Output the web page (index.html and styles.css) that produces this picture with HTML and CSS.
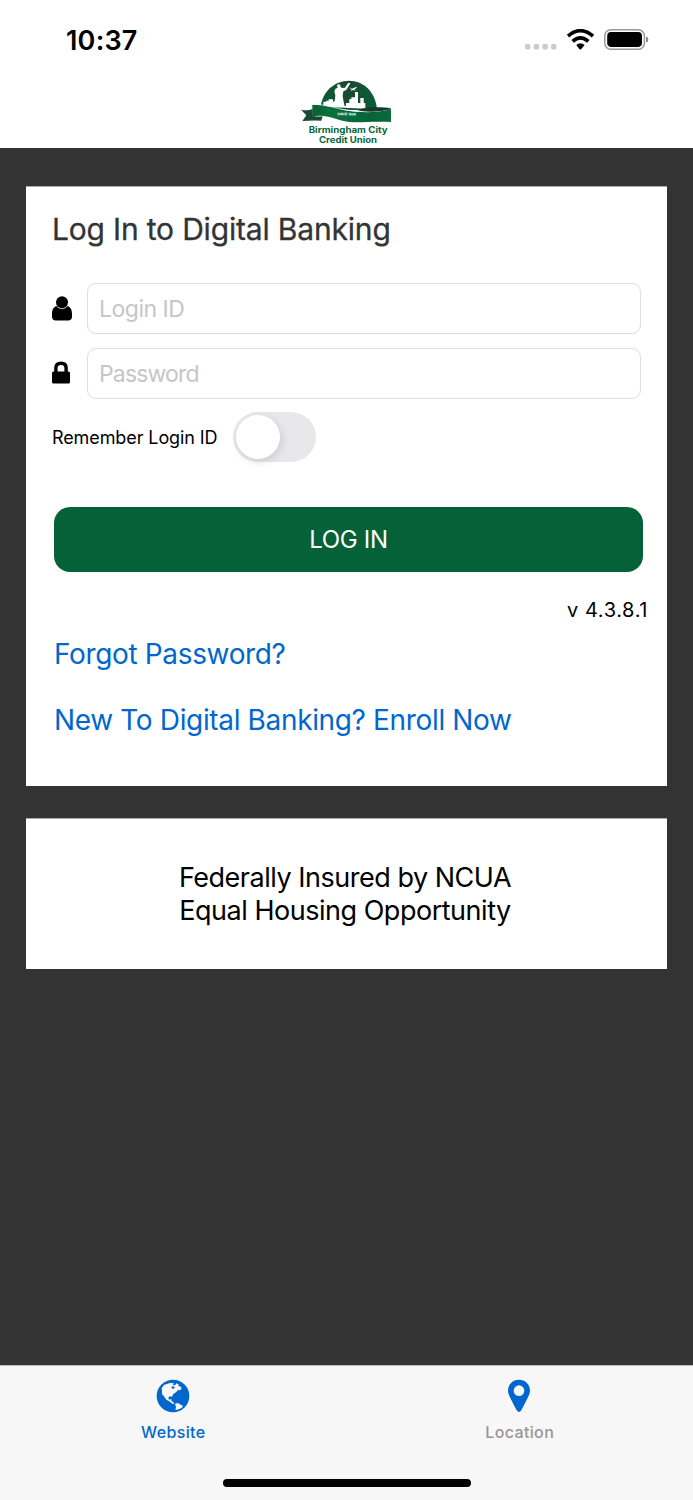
FILE: index.html
```html
<!DOCTYPE html>
<html lang="en">
<head>
    <meta charset="UTF-8">
    <meta name="viewport" content="width=device-width, initial-scale=1.0">
    <title>Birmingham City Credit Union</title>
    <link rel="stylesheet" href="styles.css">
</head>
<body>
    <header class="header">
        <div class="status-bar">
            <span class="time">10:37</span>
            <div class="status-icons">
                <svg class="dots" width="32" height="6" viewBox="0 0 32 6" fill="#cbcbcc">
                    <rect width="5.4" height="5.4" rx="1.6"/>
                    <rect x="8.7" width="5.4" height="5.4" rx="1.6"/>
                    <rect x="17.4" width="5.4" height="5.4" rx="1.6"/>
                    <rect x="26.1" width="5.4" height="5.4" rx="1.6"/>
                </svg>
                <svg class="wifi" width="27" height="21" viewBox="0 0 81 63">
                    <path d="M3 21Q40 -11 78 21" fill="none" stroke="#000" stroke-width="11"/>
                    <path d="M17 37Q40 16 64 37" fill="none" stroke="#000" stroke-width="11"/>
                    <path d="M28 48Q40 38 53 48L43 60Q40 63 37 60Z"/>
                </svg>
                <svg class="battery" width="45" height="21" viewBox="0 0 45 21">
                    <rect x=".8" y=".8" width="39.6" height="19.4" rx="6" fill="none" stroke="#999" stroke-width="1.5"/>
                    <rect x="3.2" y="3.1" width="34.8" height="14.8" rx="3.8"/>
                    <path d="M42 7.3Q44.3 8 44.3 10.5T42 13.6Z" fill="#888"/>
                </svg>
            </div>
        </div>
        <svg class="logo" width="94" height="68" viewBox="30 24 282 204">
            <defs>
                <linearGradient id="dome" x1="0" y1="0" x2="1" y2="0">
                    <stop offset="0" stop-color="#075d35"/>
                    <stop offset=".5" stop-color="#1c4932"/>
                    <stop offset="1" stop-color="#086037"/>
                </linearGradient>
                <linearGradient id="ribbon" x1="0" y1="0" x2="1" y2="0">
                    <stop offset="0" stop-color="#0f5d38"/>
                    <stop offset=".2" stop-color="#08713d"/>
                    <stop offset=".75" stop-color="#07643a"/>
                    <stop offset="1" stop-color="#0a6a3c"/>
                </linearGradient>
            </defs>
            <path d="M92 112C96 66 132 32 177 32S256 66 261 117Q215 126 92 112Z" fill="url(#dome)"/>
            <g fill="#fff">
                <path d="M100 110V95H109V92H116V88H129V96L134 93 136 77 133 63Q135 54 143 53L141 47Q143 41 150 44L153 53 164 54 175 38 181 40 169 60 160 64 158 78 161 96 164 108H168V99H178V87H184V82H195V66H204V99H211V84H221V99H226V116Z"/>
                <path d="M178 52L186 56 198 51 201 53 193 58 197 61 191 61 188 60 182 64 185 59Z"/>
            </g>
            <path d="M33 119Q52 123 68 117V137Q84 141 98 139L94 152Q70 150 37 153L49 136Z" fill="#174a31"/>
            <path d="M67 104C108 103 134 116 174 122C204 126 230 128 262 125C290 122 300 119 303 115V156C263 153 230 157 194 157C144 157 118 130 67 139Z" fill="url(#ribbon)"/>
            <path d="M66 103C108 102 134 115 174 121C184 123 195 124 205 124" fill="none" stroke="#fff" stroke-width="2"/>
            <path d="M204 121Q216 113 250 112Q299 110 302 116Q292 122 248 125Q216 126 204 121Z" fill="#163b29"/>
            <text class="logo-since" x="142" y="136" textLength="56" transform="rotate(1 170 137)">SINCE 1956</text>
            <text class="logo-name" x="56" y="190" textLength="237" lengthAdjust="spacingAndGlyphs">Birmingham City</text>
            <text class="logo-name" x="87" y="218" textLength="174" lengthAdjust="spacingAndGlyphs">Credit Union</text>
        </svg>
    </header>

    <main class="content">
        <section class="card login-card">
            <h1>Log In to Digital Banking</h1>
            <div class="field">
                <svg class="field-icon" width="22" height="26" viewBox="0 0 22 26">
                    <path d="M5 10C1.500 10.500 0 14 0 18V20.500Q0 24.500 4 24.500H16Q20 24.500 20 20.500V18C20 14 18.500 10.500 15 10Q10 15 5 10Z"/>
                    <circle cx="10" cy="6.200" r="6"/>
                    <path d="M4.600 10.300Q10 15.300 15.400 10.300" fill="none" stroke="#fff" stroke-width=".6"/>
                </svg>
                <input class="input" type="text" placeholder="Login ID">
            </div>
            <div class="field">
                <svg class="field-icon" width="22" height="26" viewBox="0 0 22 26">
                    <rect y="10.500" width="18" height="12" rx="1.500"/>
                    <path d="M3.900 12V6.800Q3.900 2.200 9 2.200T14.100 6.800V12" fill="none" stroke="#000" stroke-width="3.400"/>
                </svg>
                <input class="input password" type="password" placeholder="Password">
            </div>
            <div class="remember">
                <span class="remember-label">Remember Login ID</span>
                <span class="toggle"><span class="knob"></span></span>
            </div>
            <button class="login-button">LOG IN</button>
            <p class="version">v 4.3.8.1</p>
            <a class="link forgot" href="#">Forgot Password?</a>
            <a class="link enroll" href="#">New To Digital Banking? Enroll Now</a>
        </section>

        <section class="card notice">
            <p class="insured">Federally Insured by NCUA</p>
            <p class="housing">Equal Housing Opportunity</p>
        </section>
    </main>

    <footer class="footer">
        <nav class="tabs">
            <a class="tab active" href="#">
                <svg width="34" height="34" viewBox="0 0 102 102">
                    <circle cx="51" cy="51" r="49" fill="#0067ce"/>
                    <path d="M17 27L25 17 33 15 42 12 54 13 50 18 57 19 62 13 69 17 66 22 73 22 77 29 71 34 66 33 60 40 52 45 48 53 41 52 37 56 39 62 46 60 46 66 52 69 55 76 47 73 40 67 31 62 24 52 18 45 18 35Z" fill="#f8f8f8"/>
                    <path d="M57 74L66 72 74 77 81 80 77 87 64 92 58 92 60 85Z" fill="#f8f8f8"/>
                    <path d="M49 21L57 25 52 30 46 27Z" fill="#0067ce"/>
                </svg>
                <span class="tab-label website">Website</span>
            </a>
            <a class="tab" href="#">
                <svg class="pin" width="34" height="34" viewBox="0 0 102 102">
                    <path fill-rule="evenodd" fill="#0067ce" d="M51 2C32 2 18 16 18 35C18 46 24 54 44 94Q51 104 58 94C78 54 84 46 84 35C84 16 70 2 51 2ZM51 19A16 16 0 1 1 51 51A16 16 0 1 1 51 19Z"/>
                </svg>
                <span class="tab-label location">Location</span>
            </a>
        </nav>
        <div class="home-indicator"></div>
    </footer>
</body>
</html>
```

FILE: styles.css
```css
* {
    box-sizing: border-box;
}
body {
    font-family: Inter, 'Liberation Sans', sans-serif;
    margin: 0;
    height: 1500px;
    display: flex;
    flex-direction: column;
    background: #333;
    color: #000;
}
.header {
    height: 148px;
    background: white;
    display: flex;
    flex-direction: column;
    align-items: center;
}
.status-bar {
    width: 100%;
    height: 78px;
    padding: 0 44px 0 66px;
    display: flex;
    justify-content: space-between;
    align-items: center;
}
.time {
    padding-top: 2px;
    font-size: 27px;
    font-weight: 600;
    letter-spacing: 0.2px;
}
.status-icons {
    display: flex;
    align-items: center;
}
.dots {
    margin: 15px 10px 0 0;
}
.wifi {
    margin-right: 10px;
}
.logo {
    display: block;
}
.logo-name {
    font-size: 26px;
    font-weight: 700;
    fill: #07683a;
}
.logo-since {
    font-size: 10px;
    font-weight: 700;
    font-style: italic;
    fill: white;
}
.content {
    flex: 1;
    padding: 38px 26px 0;
}
.card {
    background: white;
    border-top: 1px solid #aaa;
}
.login-card {
    height: 600px;
    padding: 0 26px;
}
h1 {
    margin: 23px 0 35px;
    font-size: 30px;
    line-height: 38px;
    font-weight: 400;
    letter-spacing: -0.18px;
    color: #333435;
    -webkit-text-stroke: 0.3px #333435;
}
.field {
    display: flex;
    align-items: center;
    height: 51px;
    margin-bottom: 14px;
}
.field-icon {
    flex: none;
    margin-right: 13px;
}
.input {
    width: 554px;
    height: 51px;
    padding: 0 11px;
    border: 1px solid #dedede;
    border-radius: 9px;
    background: white;
    font-family: inherit;
    font-size: 23px;
    letter-spacing: -0.5px;
}
.password {
    letter-spacing: -0.85px;
}
.input::placeholder {
    color: #c6c6c7;
    opacity: 1;
}
.remember {
    display: flex;
    align-items: center;
    height: 50px;
    margin-top: -1px;
}
.remember-label {
    width: 181px;
    font-size: 18px;
    letter-spacing: -0.1px;
    white-space: nowrap;
}
.toggle {
    width: 83px;
    height: 50px;
    padding: 3px;
    border-radius: 25px;
    background: #e8e8ea;
}
.knob {
    display: block;
    width: 44px;
    height: 44px;
    border-radius: 50%;
    background: white;
    box-shadow: 2px 3px 8px rgba(0, 0, 0, 0.12);
}
.login-button {
    display: block;
    width: 589px;
    height: 65px;
    margin: 45px 0 0 2px;
    border: none;
    border-radius: 16px;
    background: #056138;
    color: white;
    font-family: inherit;
    font-size: 24px;
    letter-spacing: -0.3px;
}
.version {
    margin: 24px -7px 0 0;
    font-size: 20px;
    line-height: 28px;
    letter-spacing: 0.6px;
    text-align: right;
}
.link {
    display: block;
    margin-left: 2px;
    font-size: 28px;
    line-height: 36px;
    letter-spacing: -0.35px;
    color: #0067ce;
    text-decoration: none;
    white-space: nowrap;
}
.forgot {
    margin-top: 12px;
}
.enroll {
    margin-top: 30px;
}
.notice {
    height: 151px;
    margin-top: 32px;
    padding: 42px 3px 0 0;
    text-align: center;
}
.notice p {
    margin: 0;
    font-size: 27px;
    line-height: 33px;
    letter-spacing: -0.48px;
}
.footer {
    height: 135px;
    background: #f7f7f7;
    border-top: 1px solid #bbb;
}
.tabs {
    display: flex;
}
.tab {
    flex: 1;
    display: flex;
    flex-direction: column;
    align-items: center;
    padding-top: 13px;
    color: #979797;
    text-decoration: none;
}
.tab.active {
    color: #0067ce;
}
.pin {
    margin-right: 1px;
}
.tab-label {
    margin-top: 8px;
    font-size: 16px;
    line-height: 22px;
    font-weight: 500;
    letter-spacing: 0.35px;
}
.home-indicator {
    width: 248px;
    height: 8px;
    margin: 36px auto 0;
    border-radius: 4px;
    background: #000;
}
```
